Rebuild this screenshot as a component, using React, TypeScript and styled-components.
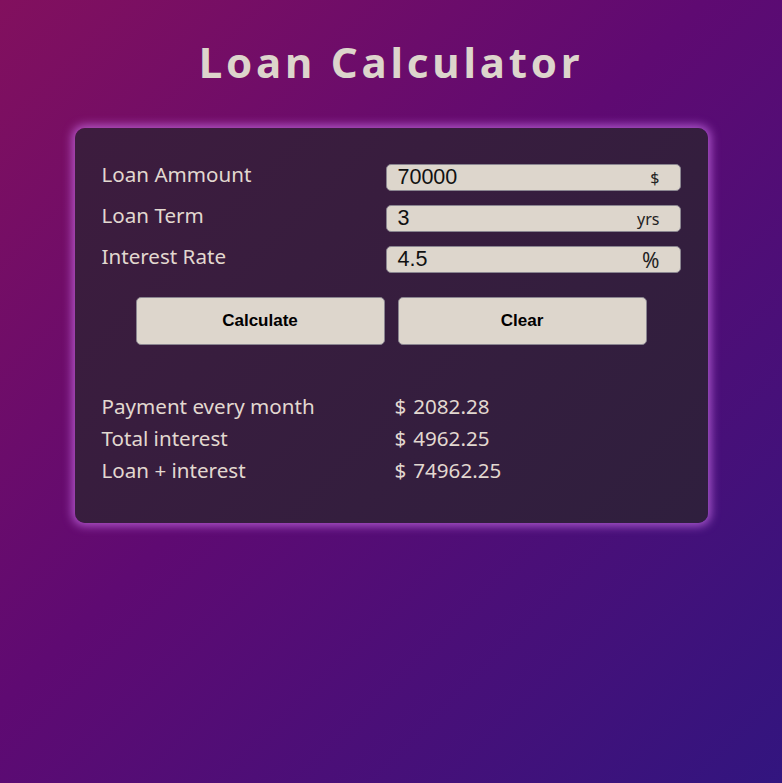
import React from "react";
import styled, { createGlobalStyle } from "styled-components";

const Global = createGlobalStyle`
  html, body { margin: 0; padding: 0; }
  body {
    min-height: 783px;
    background: linear-gradient(135deg, #82105e 0%, #5f0a72 45%, #32157f 100%);
    font-family: "Noto Sans", "Open Sans", sans-serif;
  }
`;

const Page = styled.div`
  width: 782px;
  height: 783px;
  display: flex;
  flex-direction: column;
  align-items: center;
  box-sizing: border-box;
  padding-top: 33px;
`;

const Title = styled.h1`
  margin: 0;
  font-family: "Noto Sans", sans-serif;
  font-size: 42px;
  font-weight: 700;
  letter-spacing: 3.8px;
  color: #ddd5cc;
  line-height: 58px;
`;

const Card = styled.div`
  margin-top: 37px;
  width: 633px;
  height: 395px;
  box-sizing: border-box;
  border-radius: 10px;
  background: linear-gradient(135deg, #3d1c3e 0%, #2f1f3e 100%);
  box-shadow: 0 0 10px 3px rgba(200, 110, 230, 0.75);
  padding: 35px 27px 0 27px;
  display: flex;
  flex-direction: column;
`;

const Form = styled.div`
  display: grid;
  grid-template-columns: 284px 295px;
  row-gap: 13px;
  align-items: start;
`;

const Label = styled.div`
  color: #e2d8d0;
  font-size: 20.6px;
  line-height: 22px;
`;

const Field = styled.div`
  margin-top: 1px;
  height: 27px;
  box-sizing: border-box;
  border: 1px solid #8a8590;
  border-radius: 5px;
  background: #ddd6cc;
  display: flex;
  align-items: center;
  padding: 0 20px 0 11px;
`;

const Value = styled.span`
  flex: 1;
  font-family: "Liberation Sans", Arial, sans-serif;
  font-size: 21.5px;
  color: #111;
`;

const Unit = styled.span<{ $size: number }>`
  font-family: "Noto Sans", "Liberation Sans", sans-serif;
  font-size: ${(p) => p.$size}px;
  color: #222;
`;

const Buttons = styled.div`
  display: flex;
  justify-content: center;
  gap: 13px;
  margin-top: 24px;
`;

const Button = styled.button`
  width: 249px;
  height: 48px;
  border: 1px solid #8a8590;
  border-radius: 5px;
  background: #ddd6cc;
  font-family: "Liberation Sans", Arial, sans-serif;
  font-weight: 700;
  font-size: 17px;
  color: #000;
`;

const Results = styled.div`
  margin-top: 50px;
  display: grid;
  grid-template-columns: 293px auto;
  row-gap: 10px;
`;

const RLabel = styled.div`
  color: #e2d8d0;
  font-size: 20.6px;
  line-height: 22px;
`;

const RValue = styled.div`
  color: #e2d8d0;
  font-size: 20.6px;
  line-height: 22px;
  display: flex;
  gap: 7px;
`;

const fields = [
  { label: "Loan Ammount", value: "70000", unit: "$", size: 16 },
  { label: "Loan Term", value: "3", unit: "yrs", size: 16 },
  { label: "Interest Rate", value: "4.5", unit: "%", size: 21 },
];

const results = [
  { label: "Payment every month", value: "2082.28" },
  { label: "Total interest", value: "4962.25" },
  { label: "Loan + interest", value: "74962.25" },
];

export default function App() {
  return (
    <>
      <Global />
      <Page>
        <Title>Loan Calculator</Title>
        <Card>
          <Form>
            {fields.map((f) => (
              <React.Fragment key={f.label}>
                <Label>{f.label}</Label>
                <Field>
                  <Value>{f.value}</Value>
                  <Unit $size={f.size}>{f.unit}</Unit>
                </Field>
              </React.Fragment>
            ))}
          </Form>
          <Buttons>
            <Button>Calculate</Button>
            <Button>Clear</Button>
          </Buttons>
          <Results>
            {results.map((r) => (
              <React.Fragment key={r.label}>
                <RLabel>{r.label}</RLabel>
                <RValue>
                  <span>$</span>
                  <span>{r.value}</span>
                </RValue>
              </React.Fragment>
            ))}
          </Results>
        </Card>
      </Page>
    </>
  );
}
